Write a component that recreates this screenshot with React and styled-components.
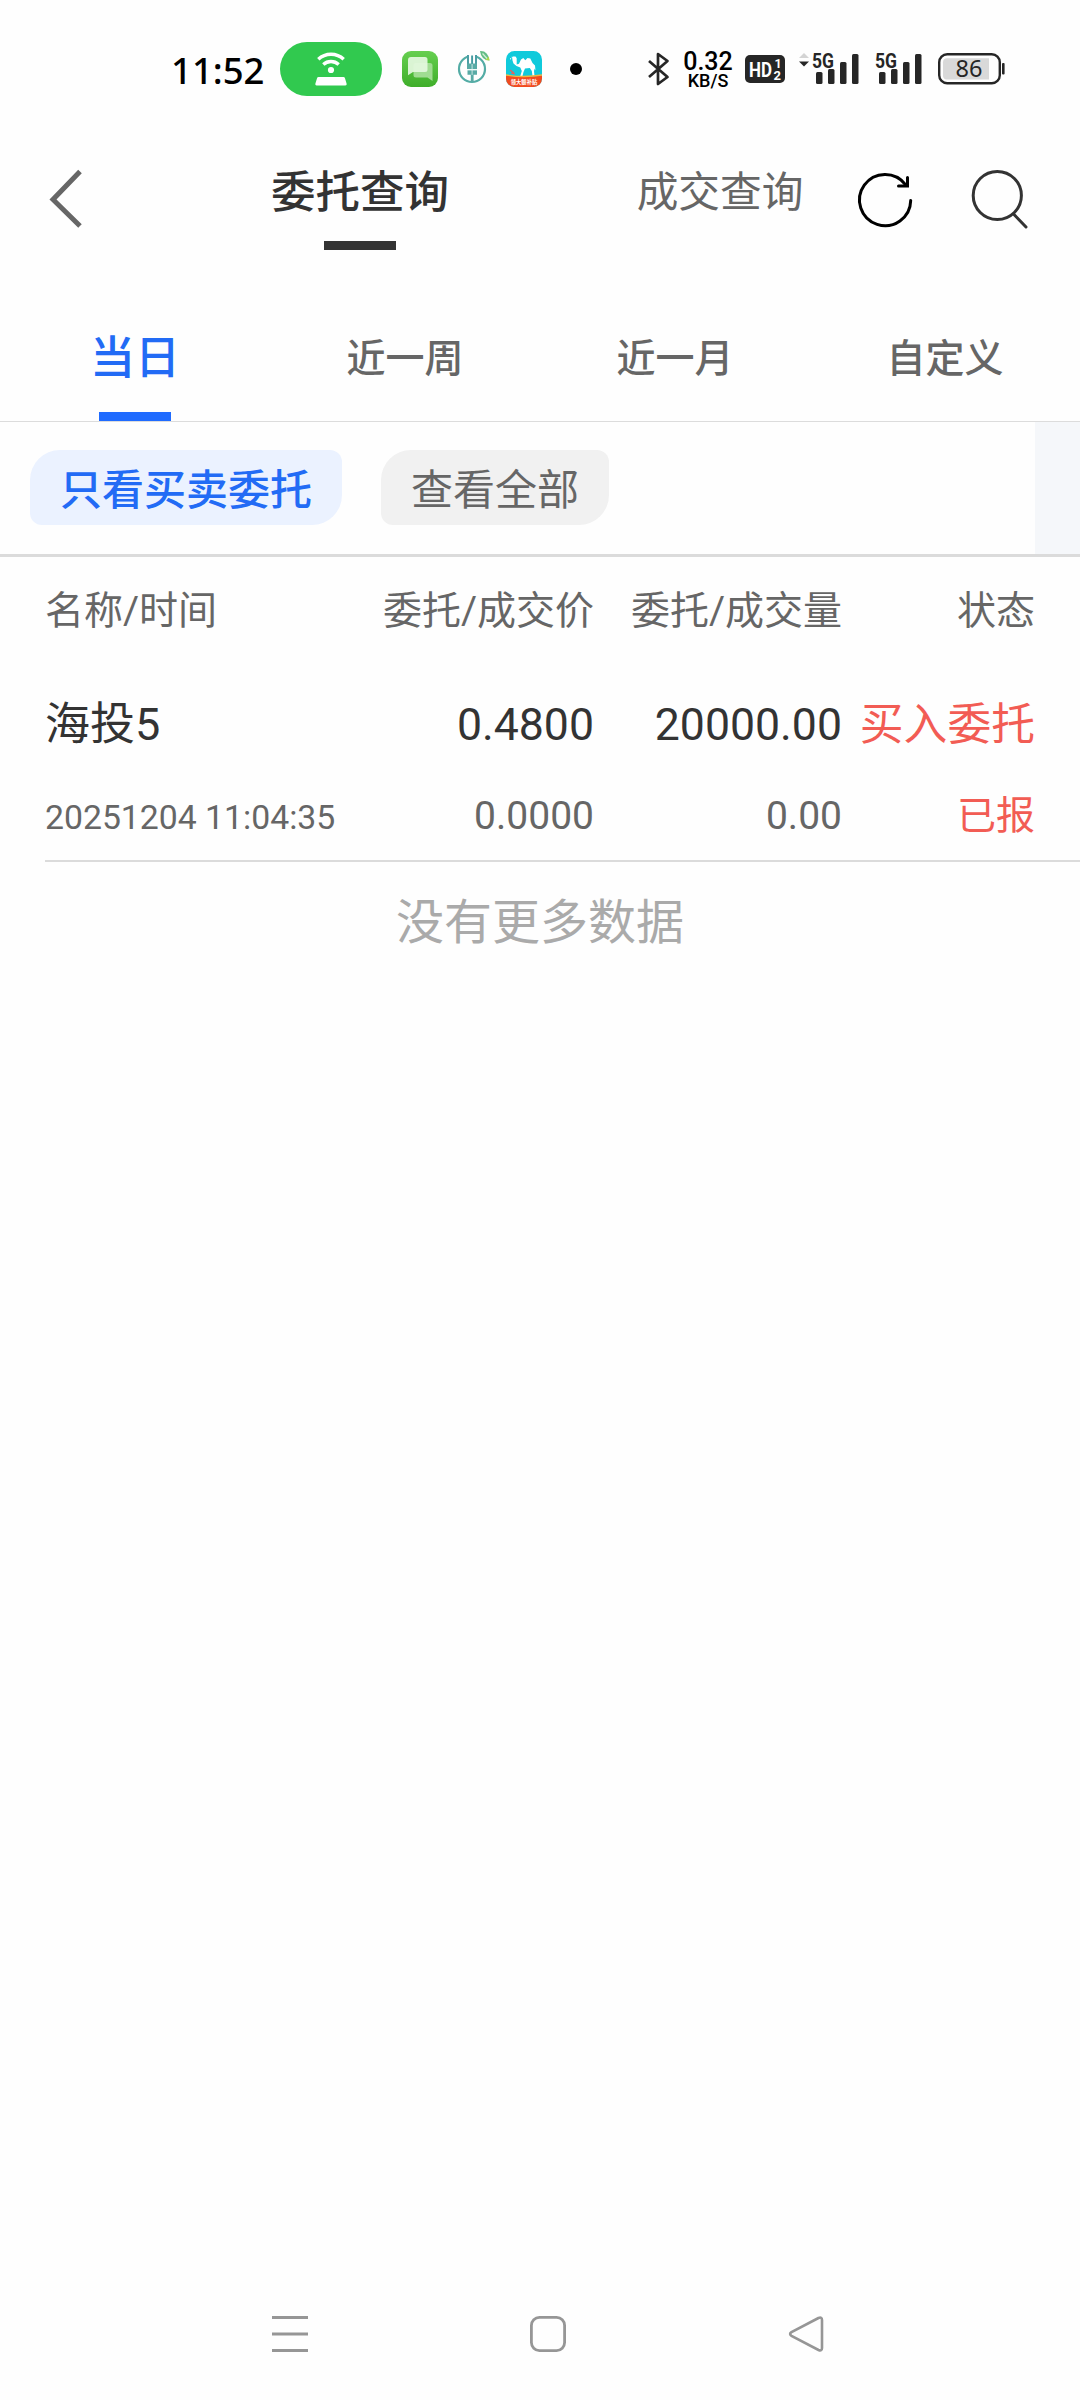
import React, { useState } from 'react';
import styled, { createGlobalStyle } from 'styled-components';

const GlobalStyle = createGlobalStyle`
  * {
    box-sizing: border-box;
  }
  body {
    margin: 0;
    background: #fefefe;
  }
  button {
    border: 0;
    padding: 0;
    background: none;
    font: inherit;
    color: inherit;
  }
  svg {
    display: block;
    flex: none;
    overflow: visible;
  }
`;

const Screen = styled.div`
  width: 1080px;
  height: 2400px;
  display: flex;
  flex-direction: column;
  background: #fefefe;
  color: #666;
  font-family: Roboto, 'Noto Sans CJK SC', sans-serif;
  white-space: nowrap;
  overflow: hidden;
`;

const StatusBar = styled.div`
  height: 138px;
  padding: 0 75px 0 171px;
  display: flex;
  align-items: center;
  color: #000;
`;
const Clock = styled.div`
  width: 109px;
  padding-top: 1px;
  font-family: 'Noto Sans', sans-serif;
  font-size: 36.5px;
  line-height: 44px;
  font-weight: 500;
`;
const HotspotPill = styled.div`
  width: 102px;
  height: 54px;
  margin-right: 20px;
  border-radius: 27px;
  background: #31c94f;
  display: flex;
  justify-content: center;
`;
const AppIcons = styled.div`
  display: flex;
  align-items: center;
  gap: 16px;
  width: 247px;
`;
const Dot = styled.div`
  width: 12px;
  height: 12px;
  margin-left: 12px;
  border-radius: 50%;
  background: #000;
`;
const NetSpeed = styled.div`
  width: 50px;
  margin: 2px 12px 0 13px;
  text-align: center;
  font-weight: 500;
`;
const SpeedValue = styled.div`
  font-size: 25px;
  line-height: 20px;
`;
const SpeedUnit = styled.div`
  font-size: 18px;
  line-height: 17px;
`;
const StatusIcons = styled.div`
  display: flex;
  align-items: center;
`;
const SignalGroup = styled.div`
  display: flex;
  gap: 1px;
  margin: 0 15px 0 13px;
`;

const Header = styled.div`
  height: 144px;
  display: flex;
`;
const BackButton = styled.button`
  width: 180px;
  height: 122px;
  padding-left: 48px;
  display: flex;
  align-items: center;
`;
const TitleTab = styled.button`
  width: 360px;
  display: flex;
  flex-direction: column;
  align-items: center;
  font-size: ${({ $active }) => ($active ? 44.5 : 41.7)}px;
  font-weight: ${({ $active }) => ($active ? 500 : 400)};
  color: ${({ $active }) => ($active ? '#333' : '#666')};
  line-height: 60px;
  padding-top: 25px;
  &::after {
    content: '';
    width: 72px;
    height: 9px;
    margin-top: 18px;
    background: ${({ $active }) => ($active ? '#333' : 'transparent')};
  }
`;
const HeaderActions = styled.div`
  display: flex;
  gap: 54px;
  height: 124px;
  align-items: center;
  margin-left: -45px;
`;

const RangeTabs = styled.div`
  height: 140px;
  display: grid;
  grid-template-columns: repeat(4, 1fr);
  border-bottom: 1px solid #dcdcdc;
`;
const RangeTab = styled.button`
  display: flex;
  flex-direction: column;
  align-items: center;
  justify-content: space-between;
  padding-top: 47px;
  font-size: ${({ $active }) => ($active ? 45 : 39)}px;
  font-weight: 500;
  line-height: 60px;
  color: ${({ $active }) => ($active ? '#226bf5' : '#666')};
  &::after {
    content: '';
    width: 72px;
    height: 9px;
    background: ${({ $active }) => ($active ? '#1f6bff' : 'transparent')};
  }
`;

const FilterBar = styled.div`
  height: 135px;
  display: flex;
  gap: 39px;
  padding: 28px 0 0 30px;
  background: linear-gradient(#f5f7fa, #f5f7fa) right / 45px 100% no-repeat;
  border-bottom: 3px solid #dbdbdb;
`;
const Chip = styled.button`
  height: 75px;
  padding: 6px 30px 0;
  border-radius: 30px 12px 30px 12px;
  font-size: 42px;
  line-height: 69px;
  font-weight: ${({ $active }) => ($active ? 500 : 400)};
  color: ${({ $active }) => ($active ? '#226bf5' : '#666')};
  background: ${({ $active }) => ($active ? '#ebf2ff' : '#f1f1f1')};
`;

const Grid = styled.div`
  display: grid;
  grid-template-columns: 301px 248px 248px 193px;
  margin-left: 45px;
`;
const TableHead = styled(Grid)`
  height: 108px;
  align-items: center;
  font-size: 39px;
  line-height: 54px;
`;
const OrderRow = styled(Grid)`
  height: 197px;
  padding-top: 30px;
  grid-template-rows: 91px 74px;
  align-items: baseline;
  line-height: 60px;
  border-bottom: 2px solid #dbdbdb;
`;
const Cell = styled.div`
  text-align: ${({ $left }) => ($left ? 'left' : 'right')};
`;
const Main = styled(Cell)`
  font-size: ${({ $left }) => ($left ? 45 : 44.6)}px;
  color: #333;
`;
const Sub = styled(Cell)`
  font-size: ${({ $left }) => ($left ? 33.75 : 39)}px;
`;
const Side = styled(Cell)`
  font-size: ${({ $large }) => ($large ? 43.8 : 39)}px;
  color: #f25c54;
`;
const NoMore = styled.div`
  flex: 1;
  padding-top: 25px;
  text-align: center;
  font-size: 48px;
  line-height: 72px;
  color: #aaa;
`;

const NavBar = styled.div`
  height: 132px;
  padding: 0 255px 0 271px;
  display: flex;
  align-items: center;
  justify-content: space-between;
`;

const BackIcon = () => (
  <svg width="36" height="60" viewBox="0 0 36 60" fill="none" stroke="#666" strokeWidth="5">
    <path d="M32 2.5 5 30.5l27 26.5" />
  </svg>
);

const RefreshIcon = () => (
  <svg width="60" height="60" viewBox="0 0 60 60" fill="none" stroke="#000" strokeWidth="3" strokeLinecap="round">
    <path d="M55.700 30.500A25.600 25.600 0 1 1 50.500 14.600" />
    <path d="M52.500 7.500v8.500h-9" />
  </svg>
);

const SearchIcon = () => (
  <svg width="60" height="60" viewBox="0 0 60 60" fill="none" stroke="#333" strokeWidth="3" strokeLinecap="round">
    <circle cx="28.3" cy="25.5" r="24.1" />
    <path d="m45 44.5 12 12.5" />
  </svg>
);

const HotspotIcon = () => (
  <svg width="34" height="54" viewBox="0 0 34 54" fill="none" stroke="#fff" strokeWidth="3.4">
    <path d="M4.3 17.3a18.5 18.5 0 0 1 25.4 0" />
    <path d="M9.3 22.5a11.5 11.5 0 0 1 15.4 0" />
    <circle cx="17" cy="28" r="3.1" fill="#fff" stroke="none" />
    <path d="M4.5 35h25q1 0 1.4 1l1.8 6q.2 1.4-1.3 1.4H2.6q-1.5 0-1.3-1.4l1.8-6q.4-1 1.4-1z" fill="#fff" stroke="none" />
  </svg>
);

const MessageIcon = () => (
  <svg width="36" height="36" viewBox="0 0 36 36">
    <defs>
      <linearGradient id="msg" x1="0" y1="0" x2="0" y2="1">
        <stop offset="0" stopColor="#66cf50" />
        <stop offset="1" stopColor="#3fae2a" />
      </linearGradient>
    </defs>
    <rect width="36" height="36" rx="9" fill="url(#msg)" />
    <path d="M14 12h14a2.5 2.5 0 0 1 2.500 2.500V30l-5-3.500H14a2.500 2.500 0 0 1-2.500-2.500v-9.500A2.500 2.500 0 0 1 14 12z" fill="#a0dc92" />
    <path d="M9 6h14a2.500 2.500 0 0 1 2.500 2.500v10a2.500 2.500 0 0 1-2.500 2.500H11l-5 3.200V9a3 3 0 0 1 3-3z" fill="#e4f7df" fillOpacity=".93" />
  </svg>
);

const BankIcon = () => (
  <svg width="36" height="36" viewBox="0 0 36 36" fill="none">
    <circle cx="18" cy="18" r="13" stroke="#53aca5" strokeWidth="2.2" />
    <path d="M13 4h10v9H13z" fill="#fefefe" />
    <path d="M14 4v10M18.100 4.500v9M22 4v10" stroke="#439aa0" strokeWidth="1.900" />
    <path d="M13 12.500h10v5.500H13zM13.500 19.300h9.500v4.400h-9.500zM16.800 23h2.800v8h-2.800z" fill="#58aaa5" />
    <path d="M18.100 13v11M13 18.700h10" stroke="#e9f6f4" strokeWidth=".8" />
    <path d="M26 0q8-.5 9.500 9.500Q27 9 26 0z" fill="#63bd87" />
    <path d="m31 9 4.500.500-.7-4z" fill="#a9d84a" />
    <path d="m28.500 2.500 4.500 5" stroke="#d4f0d6" strokeWidth="1.200" />
  </svg>
);

const CamelIcon = () => (
  <svg width="36" height="36" viewBox="0 0 36 36">
    <defs>
      <clipPath id="camel">
        <rect width="36" height="36" rx="8.500" />
      </clipPath>
    </defs>
    <g clipPath="url(#camel)">
      <rect width="36" height="36" fill="#10cadb" />
      <path
        d="M4 7.500 7 5.500h2.500l1.200 1.800v6.200l2.300-.7 2-4.300 2.300-1.500 2 2.300 2.200-2.300 2.800.5 2.200 4.500 2.500 2.500.5 5-.8-2-.7 2.500.5 5h-2l-.7-5-2-3-4.800.5-1.500 3.500-1 4h-2.200l1.500-5-1.500-3.500-3.800-1.500-3-2.500-1-3-.5-4.300L4.500 9z"
        fill="#fff"
      />
      <path d="M0 24.500q18 2.500 36 0V36H0z" fill="#f24a1f" />
      <path d="M0 24q18 3 36 0" fill="none" stroke="#f3b43f" strokeWidth="1.300" />
      <path d="m4 19 4 3M5 22l4 1" stroke="#e6605a" strokeWidth="1.200" />
    </g>
    <text x="18" y="32.600" fill="#fff" fontSize="5.300" fontWeight="700" textAnchor="middle" fontFamily="Noto Sans CJK SC">
      领大额补贴
    </text>
  </svg>
);

const BluetoothIcon = () => (
  <svg width="22" height="34" viewBox="0 0 22 34" fill="none" stroke="#262626" strokeWidth="2.700" strokeLinejoin="round">
    <path d="m1 9 18.500 16L10 32V2l9.500 7L1 25" />
  </svg>
);

const HdIcon = () => (
  <svg width="40" height="28" viewBox="0 0 40 28" fontFamily="Roboto" fontWeight="700" fill="#fff">
    <rect width="40" height="28" rx="5" fill="#262626" />
    <text x="4" y="21.500" fontSize="21" textLength="23" lengthAdjust="spacingAndGlyphs">
      HD
    </text>
    <text x="29.500" y="12.800" fontSize="12.500">1</text>
    <text x="28.500" y="24.500" fontSize="13">2</text>
  </svg>
);

const Signal = ({ arrows }) => (
  <svg width="62" height="34" viewBox="0 0 62 34" fill="#262626">
    {arrows && (
      <>
        <path d="m6 1 5 5H1z" fill="#d4d4d4" />
        <path d="M1 9.500h10l-5 5z" />
      </>
    )}
    <text x="14" y="15.500" fontFamily="Roboto" fontSize="21" fontWeight="700" textLength="22" lengthAdjust="spacingAndGlyphs">
      5G
    </text>
    <rect x="18" y="20" width="6.500" height="12" rx="1.500" />
    <rect x="30" y="17" width="6.500" height="15" rx="1.500" />
    <rect x="42" y="10" width="6.500" height="22" rx="1.500" />
    <rect x="54" y="2" width="6.500" height="30" rx="1.500" />
  </svg>
);

const BatteryIcon = ({ level }) => (
  <svg width="67" height="32" viewBox="0 0 67 32">
    <rect x="1.200" y="1.200" width="60.600" height="29" rx="8" fill="none" stroke="#262626" strokeWidth="2.400" />
    <path d="M9 5.200h42v21.300H9q-4 0-4-4V9.200q0-4 4-4z" fill="#d9d9d9" />
    <rect x="64" y="10" width="2.600" height="11.500" rx="1" fill="#262626" />
    <text x="31" y="24" textAnchor="middle" fontFamily="Noto Sans" fontSize="23.500" fill="#262626">
      {level}
    </text>
  </svg>
);

const MenuIcon = () => (
  <svg width="38" height="38" viewBox="0 0 38 38" stroke="#969696" strokeWidth="3">
    <path d="M1 2.500h36M1 19h36M1 35.500h36" />
  </svg>
);

const HomeIcon = () => (
  <svg width="38" height="38" viewBox="0 0 38 38" fill="none" stroke="#969696" strokeWidth="2.800">
    <rect x="2.400" y="2.400" width="33.200" height="33.200" rx="8" />
  </svg>
);

const TriangleIcon = () => (
  <svg width="38" height="38" viewBox="0 0 38 38" fill="none" stroke="#969696" strokeWidth="2.600">
    <path d="M31.500 3 4.500 17.200q-2.800 1.800 0 3.600L31.500 35q3.500 1.400 3.500-2V5q0-3.400-3.500-2z" />
  </svg>
);

const ranges = ['当日', '近一周', '近一月', '自定义'];
const filters = ['只看买卖委托', '查看全部'];

const orders = [
  {
    name: '海投5',
    time: '20251204 11:04:35',
    price: '0.4800',
    dealPrice: '0.0000',
    amount: '20000.00',
    dealAmount: '0.00',
    side: '买入委托',
    status: '已报',
  },
];

const App = () => {
  const [range, setRange] = useState(0);
  const [filter, setFilter] = useState(0);

  return (
    <Screen>
      <GlobalStyle />
      <StatusBar>
        <Clock>11:52</Clock>
        <HotspotPill>
          <HotspotIcon />
        </HotspotPill>
        <AppIcons>
          <MessageIcon />
          <BankIcon />
          <CamelIcon />
          <Dot />
        </AppIcons>
        <StatusIcons>
          <BluetoothIcon />
          <NetSpeed>
            <SpeedValue>0.32</SpeedValue>
            <SpeedUnit>KB/S</SpeedUnit>
          </NetSpeed>
          <HdIcon />
          <SignalGroup>
            <Signal arrows />
            <Signal />
          </SignalGroup>
          <BatteryIcon level={86} />
        </StatusIcons>
      </StatusBar>

      <Header>
        <BackButton>
          <BackIcon />
        </BackButton>
        <TitleTab $active>委托查询</TitleTab>
        <TitleTab>成交查询</TitleTab>
        <HeaderActions>
          <RefreshIcon />
          <SearchIcon />
        </HeaderActions>
      </Header>

      <RangeTabs>
        {ranges.map((label, idx) => (
          <RangeTab key={label} $active={idx === range} onClick={() => setRange(idx)}>
            {label}
          </RangeTab>
        ))}
      </RangeTabs>

      <FilterBar>
        {filters.map((label, idx) => (
          <Chip key={label} $active={idx === filter} onClick={() => setFilter(idx)}>
            {label}
          </Chip>
        ))}
      </FilterBar>

      <TableHead>
        <Cell $left>名称/时间</Cell>
        <Cell>委托/成交价</Cell>
        <Cell>委托/成交量</Cell>
        <Cell>状态</Cell>
      </TableHead>
      {orders.map(order => (
        <OrderRow key={order.time}>
          <Main $left>{order.name}</Main>
          <Main>{order.price}</Main>
          <Main>{order.amount}</Main>
          <Side $large>{order.side}</Side>
          <Sub $left>{order.time}</Sub>
          <Sub>{order.dealPrice}</Sub>
          <Sub>{order.dealAmount}</Sub>
          <Side>{order.status}</Side>
        </OrderRow>
      ))}
      <NoMore>没有更多数据</NoMore>

      <NavBar>
        <MenuIcon />
        <HomeIcon />
        <TriangleIcon />
      </NavBar>
    </Screen>
  );
};

export default App;
